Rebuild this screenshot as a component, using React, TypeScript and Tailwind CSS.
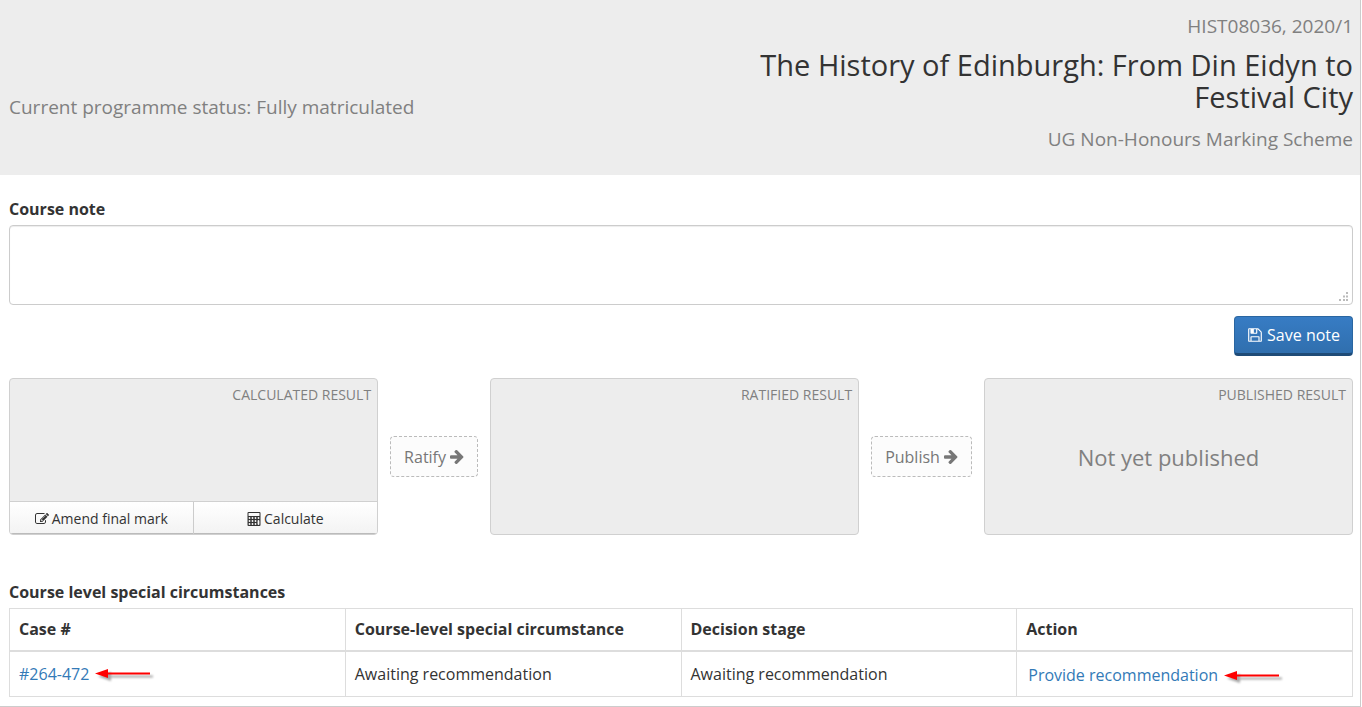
import React, { useState } from 'react';

interface IconProps {
  className?: string;
}

const SaveIcon: React.FC<IconProps> = ({ className }) => (
  <svg viewBox="0 0 1792 1792" fill="currentColor" className={className} aria-hidden="true">
    <path d="M512 1536h768v-384h-768v384zm896 0h128v-896q0-14-10-38.5t-20-34.5l-281-281q-10-10-34-20t-39-10v416q0 40-28 68t-68 28h-576q-40 0-68-28t-28-68v-416h-128v1280h128v-416q0-40 28-68t68-28h832q40 0 68 28t28 68v416zm-384-928v-320q0-13-9.5-22.5t-22.5-9.5h-192q-13 0-22.5 9.5t-9.5 22.5v320q0 13 9.5 22.5t22.5 9.5h192q13 0 22.5-9.5t9.5-22.5zm640 32v928q0 40-28 68t-68 28h-1344q-40 0-68-28t-28-68v-1344q0-40 28-68t68-28h928q40 0 88 20t76 48l280 280q28 28 48 76t20 88z" />
  </svg>
);

const EditIcon: React.FC<IconProps> = ({ className }) => (
  <svg viewBox="0 0 1792 1792" fill="currentColor" className={className} aria-hidden="true">
    <path d="M888 1184l116-116-152-152-116 116v56h96v96h56zm440-720q-16-16-33 1l-350 350q-17 17-1 33t33-1l350-350q17-17 1-33zm80 594v190q0 119-84.5 203.5t-203.5 84.5h-832q-119 0-203.5-84.5t-84.5-203.5v-832q0-119 84.5-203.5t203.5-84.5h832q63 0 117 25 15 7 18 23 3 17-9 29l-49 49q-14 14-32 8-23-6-45-6h-832q-66 0-113 47t-47 113v832q0 66 47 113t113 47h832q66 0 113-47t47-113v-126q0-13 9-22l64-64q15-15 35-7t20 29zm-96-738l288 288-672 672h-288v-288zm444 132l-92 92-288-288 92-92q28-28 68-28t68 28l152 152q28 28 28 68t-28 68z" />
  </svg>
);

const ArrowIcon: React.FC<IconProps> = ({ className }) => (
  <svg viewBox="128 128 1536 1664" fill="currentColor" className={className} aria-hidden="true">
    <path d="M1600 960q0 54-37 91l-651 651q-39 37-91 37-51 0-90-37l-75-75q-38-38-38-91t38-91l293-293h-704q-52 0-84.5-37.5t-32.5-90.5v-128q0-53 32.5-90.5t84.5-37.5h704l-293-294q-38-36-38-90t38-90l75-75q38-38 90-38 53 0 91 38l651 651q37 35 37 90z" />
  </svg>
);

const CalculatorIcon: React.FC<IconProps> = ({ className }) => (
  <svg viewBox="0 0 1792 1792" className={className} aria-hidden="true">
    <rect x="64" y="0" width="1664" height="1792" rx="128" fill="currentColor" />
    <g fill="#fafafa">
      <rect x="192" y="128" width="1408" height="384" rx="64" />
      {[768, 1152, 1536].map((cy) =>
        [320, 704, 1088].map((cx) => <circle key={`${cx}-${cy}`} cx={cx} cy={cy} r="116" />)
      )}
      <circle cx="1472" cy="768" r="116" />
      <rect x="1356" y="1036" width="232" height="616" rx="116" />
    </g>
  </svg>
);

// Red marker pointing back at the link before it
const Pointer: React.FC = () => (
  <svg viewBox="0 0 56 9" className="w-14 h-[9px] shrink-0 overflow-visible drop-shadow-[3px_3px_1px_rgba(0,0,0,0.35)]" aria-hidden="true">
    <path d="M0 4.500 13 0v9z" fill="#f00" />
    <path d="M11 3.500h44v2H11z" fill="#f00" />
  </svg>
);

interface ResultBoxProps {
  title: string;
  children?: React.ReactNode;
}

const ResultBox: React.FC<ResultBoxProps> = ({ title, children }) => (
  <section className="flex-1 min-w-0 h-[157px] flex flex-col bg-[#ededed] border border-[#d0d0d0] rounded-[4px] overflow-hidden">
    <h3 className="px-[6px] pt-[6px] text-right text-sm leading-5 text-[#808080] uppercase">{title}</h3>
    {children}
  </section>
);

const stepClass =
  'h-[41px] px-[13px] flex items-center gap-1 bg-[#fcfcfc] border border-dashed border-[#bbb] rounded-[4px] text-base text-[#777] whitespace-nowrap';

const cases = [
  { id: '#264-472', circumstance: 'Awaiting recommendation', stage: 'Awaiting recommendation', action: 'Provide recommendation' }
];

export default function App() {
  const [note, setNote] = useState('');

  return (
    <div className="mr-px font-['Open_Sans',sans-serif] text-base text-[#333] bg-white border-r border-b border-[#ccc]">
      <header className="grid grid-cols-2 items-center bg-[#ededed] pl-[9px] pr-[7px] pt-3 pb-[22px] text-[19px] text-[#808080]">
        <p className="pt-12 leading-7">Current programme status: Fully matriculated</p>
        <div className="text-right">
          <p className="leading-7">HIST08036, 2020/1</p>
          <h1 className="mt-[9px] mb-3 text-[29px] leading-8 text-[#333]">The History of Edinburgh: From Din Eidyn to Festival City</h1>
          <p className="leading-7">UG Non-Honours Marking Scheme</p>
        </div>
      </header>

      <main className="pl-[9px] pr-[7px] pt-[22px] pb-[9px]">
        <form onSubmit={(e) => e.preventDefault()}>
          <label htmlFor="course-note" className="block mb-1 leading-6 font-bold">Course note</label>
          <div className="relative">
            <textarea
              id="course-note"
              value={note}
              onChange={(e) => setNote(e.target.value)}
              className="block w-full h-20 px-3 py-2 bg-white border border-[#ccc] rounded-[4px] shadow-[inset_0_1px_1px_rgba(0,0,0,0.075)] resize-none outline-none focus:border-[#66afe9]"
            />
            <svg viewBox="0 0 10 10" className="absolute right-1 bottom-[3px] w-[10px] h-[10px] pointer-events-none" fill="#bbb" aria-hidden="true">
              <path d="M7 0h2v2H7zM4 3.500h2v2H4zM7 3.500h2v2H7zM0 7h2v2H0zM4 7h2v2H4zM7 7h2v2H7z" />
            </svg>
          </div>
          <div className="flex justify-end mt-[11px]">
            <button
              type="submit"
              className="h-10 px-3 flex items-center gap-1 rounded-[4px] border border-[#2a66a1] border-b-3 border-b-[#1f4b77] bg-linear-to-b from-[#377cc4] to-[#306fae] text-white"
            >
              <SaveIcon className="w-4 h-4" />
              Save note
            </button>
          </div>
        </form>

        <div className="flex items-center gap-3 mt-[22px]">
          <ResultBox title="Calculated result">
            <div className="mt-auto grid grid-cols-2 border-t border-[#d0d0d0] bg-linear-to-b from-white to-[#f3f3f3] shadow-[inset_0_-1px_0_#bbb] text-sm">
              <button type="button" className="h-8 pt-[2px] flex items-center justify-center gap-[3px] border-r border-[#ccc]">
                <EditIcon className="w-[14px] h-[14px]" />
                Amend final mark
              </button>
              <button type="button" className="h-8 pt-[2px] flex items-center justify-center gap-[3px]">
                <CalculatorIcon className="w-[14px] h-[14px]" />
                Calculate
              </button>
            </div>
          </ResultBox>
          <button type="button" className={stepClass}>
            Ratify
            <ArrowIcon className="w-[14px] h-4" />
          </button>
          <ResultBox title="Ratified result" />
          <button type="button" className={stepClass}>
            Publish
            <ArrowIcon className="w-[14px] h-4" />
          </button>
          <ResultBox title="Published result">
            <p className="pt-[34px] text-center text-[22px] leading-9 text-[#808080]">Not yet published</p>
          </ResultBox>
        </div>

        <h2 id="circumstances" className="mt-[45px] mb-1 leading-6 font-bold">Course level special circumstances</h2>
        <table aria-labelledby="circumstances" className="w-full table-fixed border-collapse border border-[#ddd] text-left">
          <thead>
            <tr className="border-b-2 border-[#ddd]">
              {['Case #', 'Course-level special circumstance', 'Decision stage', 'Action'].map((heading) => (
                <th key={heading} scope="col" className="h-[42px] px-[9px] border-x border-[#ddd] font-bold">{heading}</th>
              ))}
            </tr>
          </thead>
          <tbody>
            {cases.map((item) => (
              <tr key={item.id}>
                <td className="h-[46px] px-[9px] border-x border-[#ddd]">
                  <div className="flex items-center gap-[6px]">
                    <a href="#case" className="text-[#337ab7] hover:underline">{item.id}</a>
                    <Pointer />
                  </div>
                </td>
                <td className="px-[9px] border-x border-[#ddd]">{item.circumstance}</td>
                <td className="px-[9px] border-x border-[#ddd]">{item.stage}</td>
                <td className="px-[9px] border-x border-[#ddd]">
                  <div className="flex items-center gap-[6px] pl-[2px] pt-[3px]">
                    <a href="#recommendation" className="text-[#337ab7] hover:underline">{item.action}</a>
                    <Pointer />
                  </div>
                </td>
              </tr>
            ))}
          </tbody>
        </table>
      </main>
    </div>
  );
}
